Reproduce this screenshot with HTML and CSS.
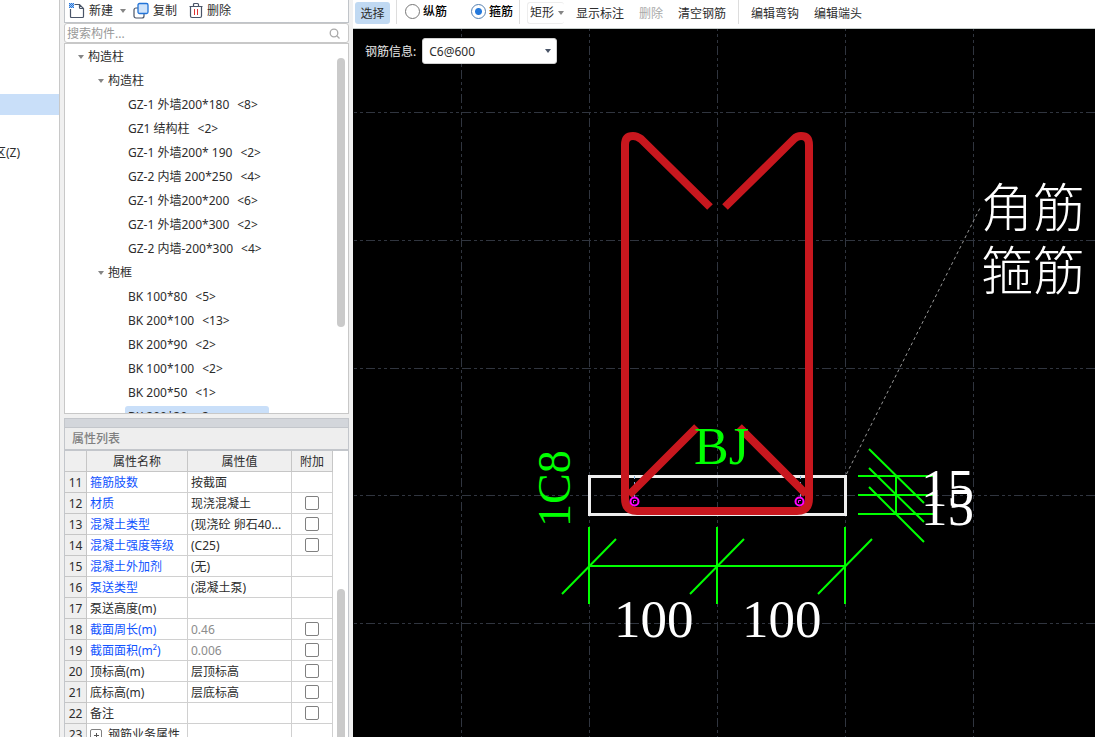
FILE: index.html
```html
<!DOCTYPE html>
<html lang="zh-CN">
<head>
<meta charset="utf-8">
<title>构造柱 截面编辑</title>
<link rel="stylesheet" href="styles.css">
</head>
<body>
<div class="app">
  <nav class="modules">
    <a class="module active" href="#" aria-label="构造柱"></a>
    <a class="module zone" href="#">区(Z)</a>
  </nav>

  <aside class="side">
    <div class="side-tools">
      <button type="button" class="tool">
        <svg width="16" height="17" viewBox="0 0 16 17"><path d="M5.500 2.500H10.500L14.500 6.500V14.500Q14.500 15.500 13.500 15.500H2.500Q1.500 15.500 1.500 14.500V7M10.500 2.500V5.500Q10.500 6.500 11.500 6.500H14.500" fill="none" stroke="#4a5568" stroke-width="1.200"/><path d="M0 1h1v1H0zM2 1h1v1H2zM4 1h1v1H4zM1 2h1v1H1zM3 2h1v1H3zM0 3h1v1H0zM2 3h1v1H2zM4 3h1v1H4zM1 4h1v1H1zM3 4h1v1H3zM0 5h1v1H0zM2 5h1v1H2zM4 5h1v1H4z" fill="#1f6fd8"/><path d="M0 1h5v5H0z" fill="#2f7fe0" opacity=".45"/></svg>
        <span>新建</span><i class="caret"></i>
      </button>
      <button type="button" class="tool copy">
        <svg width="16" height="17" viewBox="0 0 16 17"><rect x="1" y="6" width="10" height="10" rx="2" fill="#fff" stroke="#4a5568" stroke-width="1.200"/><rect x="5" y="1.500" width="10" height="10" rx="1.500" fill="#cfe3fa" stroke="#2374d8" stroke-width="1.300"/></svg>
        <span>复制</span>
      </button>
      <button type="button" class="tool">
        <svg width="14" height="17" viewBox="0 0 14 17"><path d="M0.500 4.500H13.500M4.500 4V2.500Q4.500 1.500 5.500 1.500H8.500Q9.500 1.500 9.500 2.500V4M1.500 4.500V14Q1.500 15.500 3 15.500H11Q12.500 15.500 12.500 14V4.500" fill="none" stroke="#4a5568" stroke-width="1.200"/><path d="M5.500 7V13M8.500 7V13" stroke="#d33"/></svg>
        <span>删除</span>
      </button>
    </div>

    <label class="search">
      <input type="text" placeholder="搜索构件..." aria-label="搜索构件">
      <svg width="12" height="12" viewBox="0 0 12 12"><circle cx="5" cy="5" r="3.800" fill="none" stroke="#aaa" stroke-width="1.300"/><path d="M8 8L10.500 10.500" stroke="#aaa" stroke-width="1.300"/></svg>
    </label>

    <div class="tree-box">
      <ul class="tree">
        <li class="l1"><i class="caret"></i>构造柱</li>
        <li class="l2"><i class="caret"></i>构造柱</li>
        <li class="l3"><span>GZ-1 外墙200*180</span><span>&lt;8&gt;</span></li>
        <li class="l3"><span>GZ1 结构柱</span><span>&lt;2&gt;</span></li>
        <li class="l3"><span>GZ-1 外墙200* 190</span><span>&lt;2&gt;</span></li>
        <li class="l3"><span>GZ-2 内墙 200*250</span><span>&lt;4&gt;</span></li>
        <li class="l3"><span>GZ-1 外墙200*200</span><span>&lt;6&gt;</span></li>
        <li class="l3"><span>GZ-1 外墙200*300</span><span>&lt;2&gt;</span></li>
        <li class="l3"><span>GZ-2 内墙-200*300</span><span>&lt;4&gt;</span></li>
        <li class="l2"><i class="caret"></i>抱框</li>
        <li class="l3"><span>BK 100*80</span><span>&lt;5&gt;</span></li>
        <li class="l3"><span>BK 200*100</span><span>&lt;13&gt;</span></li>
        <li class="l3"><span>BK 200*90</span><span>&lt;2&gt;</span></li>
        <li class="l3"><span>BK 100*100</span><span>&lt;2&gt;</span></li>
        <li class="l3"><span>BK 200*50</span><span>&lt;1&gt;</span></li>
        <li class="l3 selected"><span>BK 200*30</span><span>&lt;3&gt;</span></li>
      </ul>
      <div class="thumb tree-thumb"></div>
    </div>

    <div class="splitter"></div>
    <h2 class="props-title">属性列表</h2>

    <div class="props-box">
      <table class="props">
        <colgroup><col class="c-no"><col class="c-name"><col class="c-value"><col class="c-add"></colgroup>
        <thead><tr><th></th><th>属性名称</th><th>属性值</th><th>附加</th></tr></thead>
        <tbody>
          <tr><th>11</th><td class="key">箍筋肢数</td><td>按截面</td><td></td></tr>
          <tr><th>12</th><td class="key">材质</td><td>现浇混凝土</td><td><input type="checkbox" aria-label="材质 附加"></td></tr>
          <tr><th>13</th><td class="key">混凝土类型</td><td>(现浇砼 卵石40...</td><td><input type="checkbox" aria-label="混凝土类型 附加"></td></tr>
          <tr><th>14</th><td class="key">混凝土强度等级</td><td>(C25)</td><td><input type="checkbox" aria-label="混凝土强度等级 附加"></td></tr>
          <tr><th>15</th><td class="key">混凝土外加剂</td><td>(无)</td><td></td></tr>
          <tr><th>16</th><td class="key">泵送类型</td><td>(混凝土泵)</td><td></td></tr>
          <tr><th>17</th><td>泵送高度(m)</td><td></td><td></td></tr>
          <tr><th>18</th><td class="key">截面周长(m)</td><td class="fixed">0.46</td><td><input type="checkbox" aria-label="截面周长 附加"></td></tr>
          <tr><th>19</th><td class="key">截面面积(m²)</td><td class="fixed">0.006</td><td><input type="checkbox" aria-label="截面面积 附加"></td></tr>
          <tr><th>20</th><td>顶标高(m)</td><td>层顶标高</td><td><input type="checkbox" aria-label="顶标高 附加"></td></tr>
          <tr><th>21</th><td>底标高(m)</td><td>层底标高</td><td><input type="checkbox" aria-label="底标高 附加"></td></tr>
          <tr><th>22</th><td>备注</td><td></td><td><input type="checkbox" aria-label="备注 附加"></td></tr>
          <tr><th>23</th><td><button type="button" class="expand" aria-label="展开"></button>钢筋业务属性</td><td></td><td></td></tr>
        </tbody>
      </table>
      <div class="thumb props-thumb"></div>
    </div>
  </aside>

  <main class="editor">
    <div class="toolbar">
      <button type="button" class="btn pressed">选择</button>
      <div class="group radios">
        <label><input type="radio" name="bar">纵筋</label>
        <label><input type="radio" name="bar" checked>箍筋</label>
      </div>
      <div class="group actions">
        <button type="button" class="btn shape">矩形<i class="caret"></i></button>
        <button type="button" class="btn">显示标注</button>
        <button type="button" class="btn" disabled>删除</button>
        <button type="button" class="btn">清空钢筋</button>
      </div>
      <div class="group edits">
        <button type="button" class="btn">编辑弯钩</button>
        <button type="button" class="btn">编辑端头</button>
      </div>
    </div>

    <div class="canvas">
      <svg class="drawing" width="100%" height="100%">
        <g class="grid-v">
          <line x1="108.500" x2="108.500" y1="0" y2="100%"/><line x1="236.500" x2="236.500" y1="0" y2="100%"/><line x1="364.500" x2="364.500" y1="0" y2="100%"/><line x1="492.500" x2="492.500" y1="0" y2="100%"/><line x1="620.500" x2="620.500" y1="0" y2="100%"/>
        </g>
        <g class="grid-h">
          <line y1="83.500" y2="83.500" x1="0" x2="100%"/><line y1="211.500" y2="211.500" x1="0" x2="100%"/><line y1="339.500" y2="339.500" x1="0" x2="100%"/><line y1="466.500" y2="466.500" x1="0" x2="100%"/><line y1="594.500" y2="594.500" x1="0" x2="100%"/>
        </g>
        <g transform="translate(-353 -29)">
          <path class="leader" d="M846.500 474L981 206"/>
          <rect class="section" x="589.500" y="476.500" width="256" height="38"/>
          <path class="guide" d="M634.500 476V501M800.500 476V501"/>
          <path class="rebar" d="M710 207L641 139Q637 136 633 136Q625 136 625 145V498Q625 511 637 511H797Q809 511 809 498V145Q809 136 801 136Q797 136 794 139L725 207"/>
          <path class="rebar" d="M697 427L629 495M739 427L806 494"/>
          <g class="node"><circle cx="634.500" cy="501.500" r="4"/><circle cx="799.500" cy="501.500" r="4"/><path d="M633.500 503V500.500H636M798.500 503V500.500H801"/></g>
          <path class="dim" d="M589 527V604M717 527V604M845 527V604M589 566H845M858 476H936M858 495H936M858 514H936M896 476V514"/>
          <path class="dim" d="M562 594L616 539M690 594L744 539M818 594L872 539M869 449L924 503M869 468L924 522M869 487L924 542"/>
          <text class="mark" x="694" y="464">BJ</text>
          <text class="mark side-mark" transform="translate(570 527) rotate(-90)">1C8</text>
          <text class="num" x="614" y="637">100</text>
          <text class="num" x="742" y="637">100</text>
          <text class="num" x="921" y="506">15</text>
          <text class="num" x="921" y="525">15</text>
          <text class="note" x="981" y="227">角筋</text>
          <text class="note" x="981" y="290">箍筋</text>
        </g>
      </svg>
      <div class="info">
        <label for="bar-info">钢筋信息:</label>
        <div class="combo">
          <select id="bar-info"><option>C6@600</option></select>
          <i class="caret"></i>
        </div>
      </div>
    </div>
  </main>
</div>
</body>
</html>
```
FILE: styles.css
```css
* { box-sizing: border-box; }

body {
  margin: 0;
  font: 12px/18px "Noto Sans", "Noto Sans CJK SC", sans-serif;
  color: #2d2d2d;
  background: #f0f0f0;
}

button, input, select { font: inherit; color: inherit; margin: 0; }
button { border: 0; padding: 0; background: none; white-space: nowrap; }

.app { display: flex; height: 100vh; overflow: hidden; }

.caret {
  flex: none;
  border: 3px solid transparent;
  border-top: 4px solid #858585;
  border-bottom: 0;
}

/* Module strip */
.modules {
  flex: 0 0 60px;
  padding-top: 94px;
  overflow: hidden;
  background: #fff;
  border-right: 1px solid #c8c8c8;
}
.module { display: block; height: 21px; color: inherit; text-decoration: none; }
.module.active { background: #c9dff9; }
.zone { margin-top: 29px; margin-left: -6px; }

/* Side panel */
.side {
  flex: 0 0 293px;
  display: flex;
  flex-direction: column;
  min-height: 0;
  padding: 0 4px;
}

.side-tools {
  flex: none;
  display: flex;
  gap: 12px;
  height: 23px;
  padding-left: 4px;
  background: #fff;
  border: 1px solid #c0c4c9;
  border-top: 0;
}
.tool { display: flex; align-items: center; gap: 4px; height: 21px; }
.tool .caret { margin-left: 3px; }
.tool.copy { margin-left: -5px; }

.search {
  flex: none;
  display: flex;
  align-items: center;
  height: 20px;
  padding: 2px 7px 0 2px;
  background: #fff;
  border: 1px solid #c8c8c8;
  border-radius: 3px;
}
.search input { flex: 1; min-width: 0; height: 16px; padding: 0; border: 0; outline: 0; background: none; }
.search input::placeholder { color: #999; }

.tree-box {
  position: relative;
  flex: 0 1 371px;
  min-height: 0;
  overflow: hidden;
  background: #fff;
  border: 1px solid #c8c8c8;
}
.tree { list-style: none; margin: 0; padding: 1px 0 0; line-height: 24px; }
.tree li { display: flex; align-items: center; height: 24px; white-space: nowrap; }
.tree .caret { margin-right: 4px; }
.l1 { padding-left: 13px; }
.l2 { padding-left: 33px; }
.tree .l3 { gap: 8px; width: 144px; margin-left: 60px; padding-left: 3px; }
.tree .selected { height: 22px; margin-top: 1px; background: #c9dff9; border-radius: 3px; }

.thumb { position: absolute; right: 3px; width: 8px; border-radius: 4px; background: #cacaca; }
.tree-thumb { top: 14px; height: 269px; }
.props-thumb { top: 138px; bottom: -8px; }

.splitter { flex: none; height: 10px; margin-top: 4px; background: #d3d6db; border: 1px solid #c3c6cb; }
.props-title {
  flex: none;
  height: 22px;
  margin: 0;
  padding-left: 7px;
  font-size: 12px;
  font-weight: 500;
  line-height: 21px;
  color: #808080;
  background: #eee;
  border: 1px solid #c3c6cb;
  border-top: 0;
}

.props-box {
  position: relative;
  flex: 1;
  min-height: 0;
  overflow: hidden;
  background: #fff;
  border: 1px solid #c3c6cb;
  border-width: 1px 1px 0;
}
.props { width: 268px; table-layout: fixed; border-collapse: separate; border-spacing: 0; }
.c-no { width: 22px; }
.c-name { width: 101px; }
.c-value { width: 104px; }
.c-add { width: 41px; }
.props th, .props td {
  height: 21px;
  padding: 2px 3px 0;
  overflow: hidden;
  white-space: nowrap;
  line-height: 18px;
  border: solid #d0d0d0;
  border-width: 0 1px 1px 0;
}
.props th { padding: 2px 0 0; font-weight: 400; text-align: center; background: #efefef; border-color: #c6c6c6; }
.props .key { color: #1053ff; }
.props .fixed { color: #8c8c8c; }
.props td:last-child { padding: 0; text-align: center; }
.props input {
  appearance: none;
  display: block;
  width: 14px;
  height: 14px;
  margin: 0 auto;
  background: #fff;
  border: 1px solid #808080;
  border-radius: 2px;
}
.expand {
  width: 12px;
  height: 12px;
  margin-right: 6px;
  vertical-align: -1px;
  border: 1px solid #808080;
  border-radius: 2px;
  background:
    linear-gradient(#555, #555) center / 5px 1px no-repeat,
    linear-gradient(#555, #555) center / 1px 5px no-repeat;
}

/* Editor */
.editor { flex: 1; min-width: 0; display: flex; flex-direction: column; }

.toolbar {
  flex: none;
  display: flex;
  height: 29px;
  padding: 0 2px;
  background: #fff;
  border-bottom: 1px solid #c4cbc9;
}
.group { display: flex; height: 24px; border-left: 1px solid #ddd; }
.btn { height: 22px; margin-top: 2px; padding-top: 2px; }
.btn:disabled { color: #aaa; }
.pressed { width: 35px; margin-right: 6px; background: #c0d9f2; border-radius: 3px; }

.radios { gap: 24px; padding: 0 6px 0 8px; color: #000; font-weight: 500; }
.radios label { display: flex; align-items: center; gap: 3px; height: 23px; }
.radios input {
  appearance: none;
  width: 15px;
  height: 15px;
  background: #fff;
  border: 1px solid #777;
  border-radius: 50%;
}
.radios input:checked { border-color: #5580b0; background: radial-gradient(circle, #2479dc 3px, #fff 4px); }

.actions { gap: 15px; padding: 0 12px 0 7px; }
.shape { display: flex; align-items: center; gap: 4px; padding: 0 0 0 2px; border: 1px solid #ededed; border-right: 0; border-radius: 3px; }
.shape + .btn { margin-left: -3px; }
.edits { gap: 15px; padding-left: 12px; }

.canvas { position: relative; flex: 1; min-height: 0; overflow: hidden; background: #000; }
.drawing { display: block; }

.info {
  position: absolute;
  top: 9px;
  left: 12px;
  display: flex;
  align-items: center;
  gap: 6px;
  color: #e8e8e8;
}
.info label { padding-top: 2px; }
.combo { position: relative; display: flex; align-items: center; color: #2d2d2d; }
.combo select {
  appearance: none;
  width: 135px;
  height: 26px;
  padding: 2px 6px 0;
  background: #fff;
  border: 1px solid #d0d0d0;
  border-radius: 3px;
}
.combo .caret { position: absolute; right: 6px; border-top-color: #4a5568; pointer-events: none; }

/* Section drawing */
.grid-v, .grid-h { stroke: #30353f; stroke-dasharray: 9 3 3 3 3 3; }
.grid-v { stroke-dashoffset: 7; }
.grid-h { stroke-dashoffset: 11; }
.leader { stroke: #999; stroke-dasharray: 3 3; }
.section { fill: none; stroke: #eee; stroke-width: 3; }
.guide { stroke: #7ba9d8; stroke-dasharray: 3 3; }
.rebar { fill: none; stroke: #c8171e; stroke-width: 8; }
.node { fill: none; stroke: #f0f; stroke-width: 2; }
.node path { stroke-width: 1; }
.dim { stroke: #0f0; stroke-width: 2; }
.mark, .num { font-family: "Liberation Serif", serif; }
.mark { font-size: 52px; fill: #0f0; }
.side-mark { font-size: 46px; }
.num { font-size: 53px; fill: #fff; }
.note { font-family: "Noto Sans CJK SC", sans-serif; font-size: 52px; font-weight: 300; fill: #fff; }
```
